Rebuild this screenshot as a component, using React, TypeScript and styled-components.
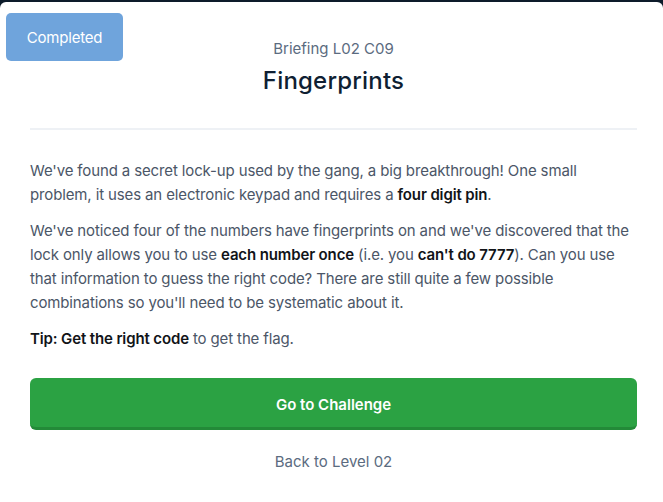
import React from "react";
import styled, { createGlobalStyle } from "styled-components";

const Global = createGlobalStyle`
  html, body { margin: 0; padding: 0; background: #0d1b2a; }
  body { font-family: Inter, "Open Sans", sans-serif; overflow: hidden; }
`;

const Card = styled.div`
  position: relative;
  margin-top: 2px;
  background: #ffffff;
  border-radius: 6px 6px 0 0;
  min-height: 500px;
  padding: 37px 26px 0 30px;
  box-sizing: border-box;
`;

const Badge = styled.div`
  position: absolute;
  left: 6px;
  top: 11px;
  width: 117px;
  height: 48px;
  border-radius: 5px;
  background: #6fa4dc;
  color: #ffffff;
  font-size: 15px;
  letter-spacing: -0.2px;
  display: flex;
  align-items: center;
  justify-content: center;
`;

const Header = styled.header`
  display: flex;
  flex-direction: column;
  align-items: center;
  padding-bottom: 31px;
  border-bottom: 2px solid #eef1f5;
`;

const Eyebrow = styled.div`
  font-size: 15px;
  line-height: 20px;
  color: #5b6b80;
`;

const Title = styled.h1`
  margin: 6px 0 0;
  font-size: 24px;
  line-height: 32px;
  font-weight: 500;
  letter-spacing: 0.2px;
  color: #0f1f33;
`;

const Body = styled.div`
  padding-top: 29px;
`;

const Para = styled.p`
  margin: 0 0 12px;
  font-size: 15px;
  line-height: 24px;
  letter-spacing: -0.13px;
  color: #4b5667;
`;

const Strong = styled.span`
  color: #111418;
  font-weight: 600;
`;

const Cta = styled.button`
  margin-top: 27px;
  width: 100%;
  height: 52px;
  box-sizing: border-box;
  border: none;
  border-bottom: 3px solid #238a38;
  border-radius: 6px;
  background: #2ba243;
  color: #ffffff;
  font-family: inherit;
  font-size: 15px;
  font-weight: 600;
  display: flex;
  align-items: center;
  justify-content: center;
  padding: 3px 0 0;
`;

const Back = styled.a`
  display: block;
  margin-top: 22px;
  text-align: center;
  font-size: 15px;
  line-height: 20px;
  color: #5b6b80;
`;

export default function App() {
  return (
    <>
      <Global />
      <Card>
        <Badge>Completed</Badge>
        <Header>
          <Eyebrow>Briefing L02 C09</Eyebrow>
          <Title>Fingerprints</Title>
        </Header>
        <Body>
          <Para>
            We've found a secret lock-up used by the gang, a big breakthrough! One small
            problem, it uses an electronic keypad and requires a <Strong>four digit pin</Strong>.
          </Para>
          <Para>
            We've noticed four of the numbers have fingerprints on and we've discovered that the
            lock only allows you to use <Strong>each number once</Strong> (i.e. you{" "}
            <Strong>can't do 7777</Strong>). Can you use that information to guess the right code?
            There are still quite a few possible combinations so you'll need to be systematic about it.
          </Para>
          <Para>
            <Strong>Tip: Get the right code</Strong> to get the flag.
          </Para>
          <Cta>Go to Challenge</Cta>
          <Back>Back to Level 02</Back>
        </Body>
      </Card>
    </>
  );
}
